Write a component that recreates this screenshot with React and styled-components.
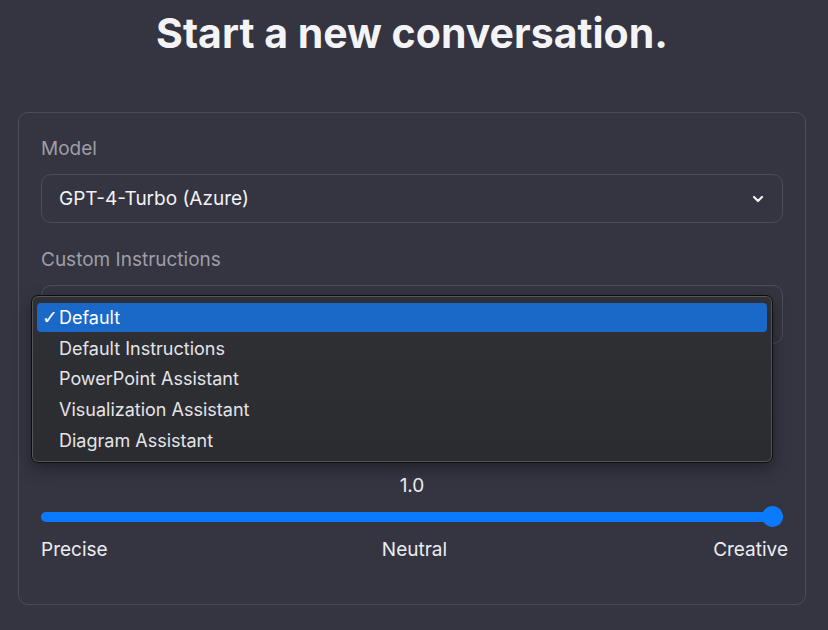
import styled, { createGlobalStyle } from "styled-components";

const GlobalStyle = createGlobalStyle`
    html, body {
        margin: 0;
        padding: 0;
        background: #343541;
    }
    body {
        font-family: Inter, "Noto Sans", "Liberation Sans", sans-serif;
        color: #ececf1;
        -webkit-font-smoothing: antialiased;
    }
`;

const Page = styled.main`
    width: 828px;
    height: 630px;
    box-sizing: border-box;
    padding: 9px 22px 0 18px;
    overflow: hidden;
`;

const Title = styled.h1`
    margin: 0;
    font-size: 41px;
    line-height: 48px;
    font-weight: 700;
    text-align: center;
    color: #f4f4f7;
`;

const Card = styled.section`
    margin-top: 55px;
    height: 493px;
    box-sizing: border-box;
    border: 1px solid #4a4b55;
    border-radius: 10px;
    padding: 24px 22px 0 22px;
    display: flex;
    flex-direction: column;
`;

const Label = styled.label`
    font-size: 19px;
    line-height: 24px;
    color: #9d9ea7;
`;

const Field = styled.div`
    position: relative;
    margin-top: 13px;
`;

const SelectBox = styled.div`
    height: ${p => p.$h}px;
    box-sizing: border-box;
    border: 1px solid #4c4d58;
    border-radius: 10px;
    padding: 0 18px 0 17px;
    display: flex;
    align-items: center;
    justify-content: space-between;
    font-size: 19px;
    color: #f2f2f5;
    margin-bottom: 25px;
`;

const Chevron = () => (
    <svg width="12" height="8" viewBox="0 0 12 8">
        <polyline points="2,2 6,6 10,2" fill="none" stroke="#f2f2f5" strokeWidth="2.2" strokeLinecap="round" strokeLinejoin="round" />
    </svg>
);

const Menu = styled.ul`
    position: absolute;
    top: 10px;
    left: -10px;
    width: 742px;
    height: 168px;
    box-sizing: border-box;
    margin: 0;
    padding: 7px 5px;
    list-style: none;
    border: 1px solid #0d0d10;
    border-radius: 7px;
    background: linear-gradient(180deg, #2f3035 0%, #2b2c30 100%);
    box-shadow: inset 0 0 0 1px #55565c, 0 6px 16px rgba(0, 0, 0, 0.35);
    display: flex;
    flex-direction: column;
    gap: 2px;
    z-index: 2;
`;

const Item = styled.li`
    height: 29px;
    border-radius: 4px;
    padding-left: 5px;
    display: flex;
    align-items: center;
    font-size: 18px;
    color: ${p => (p.$active ? "#ffffff" : "#e4e4e8")};
    background: ${p => (p.$active ? "#1a68c7" : "transparent")};
`;

const Check = styled.span`
    display: inline-block;
    width: 17px;
    flex: none;
    font-size: 19px;
    font-family: "DejaVu Sans", sans-serif;
`;

const SliderBlock = styled.div`
    margin-top: 105px;
    display: flex;
    flex-direction: column;
`;

const Value = styled.div`
    text-align: center;
    font-size: 19px;
    line-height: 24px;
    color: #ececf1;
`;

const Range = styled.input`
    -webkit-appearance: none;
    appearance: none;
    width: 742px;
    height: 21px;
    margin: 8px 0 0 0;
    background: transparent;

    &::-webkit-slider-runnable-track {
        height: 10px;
        border-radius: 5px;
        background: #0a7aff;
    }
    &::-webkit-slider-thumb {
        -webkit-appearance: none;
        width: 21px;
        height: 21px;
        margin-top: -5.5px;
        border-radius: 50%;
        background: #0a7aff;
        border: none;
    }
`;

const Scale = styled.div`
    margin-top: 11px;
    margin-right: -5px;
    display: grid;
    grid-template-columns: 1fr auto 1fr;
    font-size: 19px;
    line-height: 24px;
    color: #ececf1;
`;

const ScaleText = styled.span`
    text-align: ${p => p.$align};
`;

const options = [
    "Default",
    "Default Instructions",
    "PowerPoint Assistant",
    "Visualization Assistant",
    "Diagram Assistant",
];

export default function App() {
    return (
        <>
            <GlobalStyle />
            <Page>
                <Title>Start a new conversation.</Title>
                <Card>
                    <Label>Model</Label>
                    <Field>
                        <SelectBox $h={49}>
                            <span>GPT-4-Turbo (Azure)</span>
                            <Chevron />
                        </SelectBox>
                    </Field>
                    <Label>Custom Instructions</Label>
                    <Field>
                        <SelectBox $h={59}>
                            <span>Default</span>
                            <Chevron />
                        </SelectBox>
                        <Menu>
                            {options.map((o, i) => (
                                <Item key={o} $active={i === 0}>
                                    <Check>{i === 0 ? "✓" : ""}</Check>
                                    {o}
                                </Item>
                            ))}
                        </Menu>
                    </Field>
                    <SliderBlock>
                        <Value>1.0</Value>
                        <Range type="range" min="0" max="1" step="0.1" defaultValue="1" />
                        <Scale>
                            <ScaleText $align="left">Precise</ScaleText>
                            <ScaleText $align="center">Neutral</ScaleText>
                            <ScaleText $align="right">Creative</ScaleText>
                        </Scale>
                    </SliderBlock>
                </Card>
            </Page>
        </>
    );
}
